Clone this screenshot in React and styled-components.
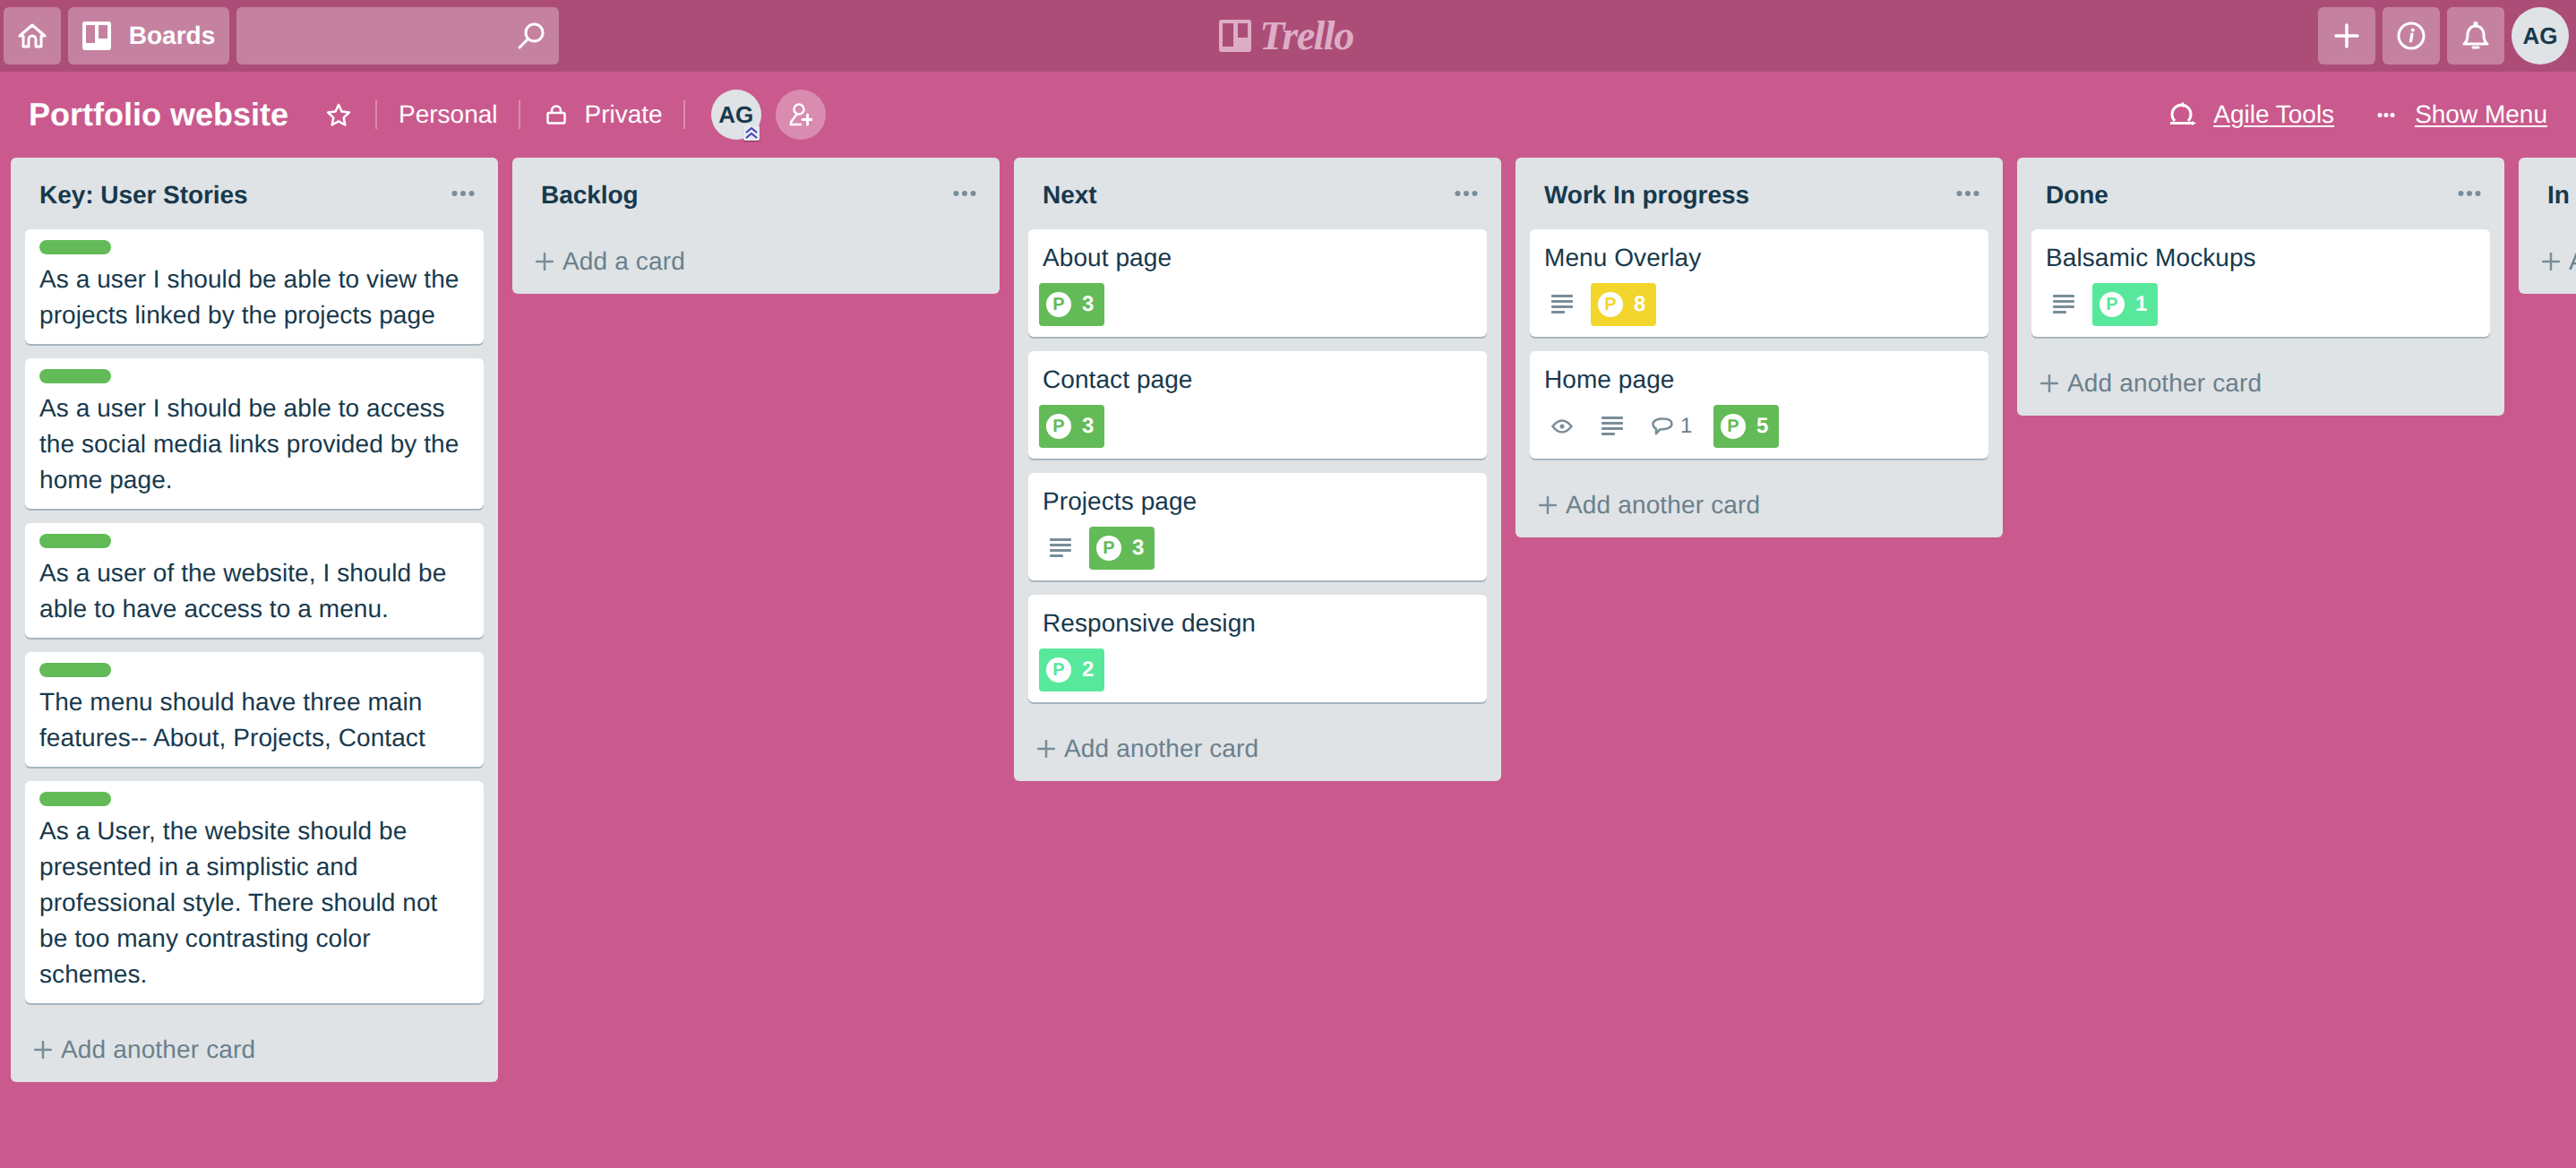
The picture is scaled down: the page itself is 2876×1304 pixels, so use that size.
import styled, { createGlobalStyle } from 'styled-components';

const textColor = '#17394D';
const mutedColor = '#6B808C';
const iconColor = '#798D99';
const green = '#63BB57';
const yellow = '#F2D62E';
const mint = '#58E89C';

const GlobalStyle = createGlobalStyle`
    html, body {
        margin: 0;
        padding: 0;
        height: 100%;
        overflow: hidden;
    }
    body {
        font-family: "Liberation Sans", Arial, sans-serif;
        background: #CA5A8E;
        text-rendering: geometricPrecision;
    }
`;

const Page = styled.div`
    width: 2876px;
    height: 1304px;
    display: flex;
    flex-direction: column;
    overflow: hidden;
    background: #CA5A8E;
`;

const TopBar = styled.header`
    display: grid;
    grid-template-columns: 1fr auto 1fr;
    align-items: center;
    height: 80px;
    padding: 0 8px 0 4px;
    background: #AC4D78;
`;

const BarGroup = styled.div`
    display: flex;
    align-items: center;
    gap: 8px;
    justify-content: ${props => props.$end ? 'flex-end' : 'flex-start'};
`;

const BarButton = styled.div`
    display: flex;
    align-items: center;
    justify-content: center;
    width: ${props => props.$width || 64}px;
    height: 64px;
    border-radius: 6px;
    background: rgba(255, 255, 255, 0.3);
    color: #fff;
`;

const BoardsText = styled.span`
    margin-left: 20px;
    font-size: 28px;
    font-weight: 700;
`;

const SearchBox = styled(BarButton)`
    justify-content: flex-end;
    padding-right: 16px;
    box-sizing: border-box;
`;

const Logo = styled.div`
    display: flex;
    align-items: center;
    gap: 9px;
    color: #DDADC6;
`;

const LogoWord = styled.span`
    font-family: "Liberation Serif", serif;
    font-style: italic;
    font-weight: 700;
    font-size: 46px;
    line-height: 60px;
    letter-spacing: -1.5px;
`;

const Avatar = styled.div`
    position: relative;
    display: flex;
    align-items: center;
    justify-content: center;
    width: ${props => props.$size}px;
    height: ${props => props.$size}px;
    border-radius: 50%;
    background: #DFE3E6;
    color: ${textColor};
    font-size: 26px;
    font-weight: 700;
`;

const AdminMark = styled.span`
    position: absolute;
    right: 2px;
    bottom: -1px;
    display: flex;
    width: 18px;
    height: 17px;
    border-radius: 2px;
    background: #E6E9EE;
    box-shadow: 0 1px 1px rgba(80, 20, 60, 0.6);
`;

const BoardBar = styled.div`
    display: flex;
    align-items: center;
    justify-content: space-between;
    height: 96px;
    padding: 0 32px;
    color: #fff;
`;

const BarSide = styled.div`
    display: flex;
    align-items: center;
`;

const BoardTitle = styled.h1`
    margin: 0 42px 0 0;
    font-size: 36px;
    font-weight: 700;
    line-height: 44px;
`;

const BarText = styled.span`
    font-size: 28px;
    line-height: 40px;
    margin-left: ${props => props.$gap || 0}px;
`;

const BarLink = styled(BarText)`
    text-decoration: underline;
    text-decoration-thickness: 2px;
    text-underline-offset: 3px;
`;

const BarDots = styled.span`
    display: flex;
    margin: 0 22px 0 48px;
`;

const Separator = styled.span`
    width: 2px;
    height: 32px;
    margin: 0 ${props => props.$after || 24}px 0 ${props => props.$before || 24}px;
    background: rgba(255, 255, 255, 0.3);
`;

const InviteButton = styled.div`
    display: flex;
    align-items: center;
    justify-content: center;
    width: 56px;
    height: 56px;
    margin-left: 16px;
    border-radius: 50%;
    background: rgba(255, 255, 255, 0.3);
`;

const Board = styled.main`
    display: flex;
    align-items: flex-start;
    gap: 16px;
    padding-left: 12px;
`;

const List = styled.section`
    flex: 0 0 544px;
    border-radius: 6px;
    background: #DFE3E6;
`;

const ListHeader = styled.div`
    display: flex;
    align-items: center;
    justify-content: space-between;
    height: 80px;
    padding: 0 26px 0 32px;
    box-sizing: border-box;
`;

const ListTitle = styled.h2`
    margin: 0;
    padding-top: 4px;
    color: ${textColor};
    font-size: 28px;
    font-weight: 700;
    letter-spacing: -0.05px;
    white-space: nowrap;
`;

const Cards = styled.div`
    display: flex;
    flex-direction: column;
    gap: 16px;
    padding: 0 16px 16px;
    &:empty {
        padding: 0;
    }
`;

const Card = styled.article`
    padding: 12px;
    border-radius: 6px;
    background: #fff;
    box-shadow: 0 2px 0 #A8B5BD;
    color: ${textColor};
    font-size: 28px;
    line-height: 40px;
    letter-spacing: 0.08px;
`;

const CardLabel = styled.div`
    width: 80px;
    height: 16px;
    margin: 0 0 8px 4px;
    border-radius: 8px;
    background: ${green};
`;

const CardText = styled.div`
    padding: 0 4px;
`;

const Badges = styled.div`
    display: flex;
    align-items: center;
    height: 48px;
    margin-top: 8px;
`;

const IconBadge = styled.span`
    display: flex;
    align-items: center;
    padding: 0 12px;
    margin-right: 8px;
    color: ${mutedColor};
    font-size: 24px;
`;

const CommentCount = styled.span`
    margin: 0 3px 0 8px;
    width: 14px;
`;

const PointsBadge = styled.span`
    display: flex;
    align-items: center;
    height: 48px;
    padding: 0 12px 0 8px;
    border-radius: 4px;
    background: ${props => props.$color};
    color: #fff;
    font-size: 24px;
    font-weight: 700;
`;

const PointsCircle = styled.span`
    display: flex;
    align-items: center;
    justify-content: center;
    width: 28px;
    height: 28px;
    margin-right: 12px;
    border-radius: 50%;
    background: #fff;
    color: ${props => props.$color};
    font-size: 20px;
`;

const AddCard = styled.div`
    display: flex;
    align-items: center;
    height: 72px;
    padding-left: 26px;
    color: ${mutedColor};
    font-size: 28px;
    letter-spacing: 0.15px;
    white-space: nowrap;
`;

const AddPlus = styled.svg`
    margin-right: 10px;
`;

const HomeIcon = () => (
    <svg width="32" height="28" viewBox="0 0 32 28" fill="none" stroke="#fff" strokeWidth="3" strokeLinejoin="round">
        <path d="M2 14 16 2l14 12h-4v12h-6v-8a4 4 0 0 0-8 0v8H6V14z" />
    </svg>
);

const BoardsIcon = () => (
    <svg width="32" height="32" viewBox="0 0 32 32">
        <path fill="#fff" fillRule="evenodd" d="M3 0h26a3 3 0 0 1 3 3v26a3 3 0 0 1-3 3H3a3 3 0 0 1-3-3V3a3 3 0 0 1 3-3zm1 4v20h10V4H4zm14 0v15h10V4H18z" />
    </svg>
);

const SearchIcon = () => (
    <svg width="30" height="30" viewBox="0 0 30 30" fill="none" stroke="#fff" strokeWidth="3" strokeLinecap="round">
        <circle cx="18.5" cy="11.5" r="9.5" />
        <path d="M11.5 18.500 2 28" />
    </svg>
);

const PlusIcon = () => (
    <svg width="28" height="28" viewBox="0 0 28 28" stroke="#fff" strokeWidth="3.500" strokeLinecap="round">
        <path d="M14 2v24M2 14h24" />
    </svg>
);

const InfoIcon = () => (
    <svg width="32" height="32" viewBox="0 0 32 32" fill="none">
        <circle cx="16" cy="16" r="14" stroke="#fff" strokeWidth="3" />
        <path d="M17 14l-1.500 8" stroke="#fff" strokeWidth="3.200" strokeLinecap="round" />
        <circle cx="17.800" cy="9.500" r="2" fill="#fff" />
    </svg>
);

const BellIcon = () => (
    <svg width="30" height="32" viewBox="0 0 30 32" fill="none" stroke="#fff" strokeWidth="3" strokeLinejoin="round">
        <path d="M2 25c3-2 4-5 4-10 0-6 4-10 9-10s9 4 9 10c0 5 1 8 4 10H2z" />
        <circle cx="15" cy="2.500" r="1" fill="#fff" />
        <path d="M12 29h6" strokeLinecap="round" />
    </svg>
);

const LogoMark = () => (
    <svg width="36" height="36" viewBox="0 0 36 36">
        <path fill="currentColor" fillRule="evenodd" d="M3 0h30a3 3 0 0 1 3 3v30a3 3 0 0 1-3 3H3a3 3 0 0 1-3-3V3a3 3 0 0 1 3-3zm1 4v26h12V4H4zm17 0v16h11V4H21z" />
    </svg>
);

const StarIcon = () => (
    <svg width="28" height="26" viewBox="0 0 28 26" fill="none" stroke="#fff" strokeWidth="2.500" strokeLinejoin="round">
        <path d="M14 2l3.500 7.600 8.300 1-6.100 5.700 1.600 8.200L14 20.400 6.700 24.500l1.600-8.200-6.100-5.700 8.300-1z" />
    </svg>
);

const LockIcon = () => (
    <svg width="22" height="22" viewBox="0 0 22 22" fill="none" stroke="#fff" strokeWidth="2.500">
        <rect x="1.500" y="9" width="19" height="11.500" rx="1.500" />
        <path d="M6 9V6.500a5 5 0 0 1 10 0V9" />
    </svg>
);

const InviteIcon = () => (
    <svg width="26" height="26" viewBox="0 0 26 26" fill="none" stroke="#fff" strokeWidth="2.500" strokeLinecap="round">
        <circle cx="11" cy="7" r="5.500" />
        <path d="M8.500 12.500 2 21.500v2.500h11" />
        <path d="M20.500 13v11M15 18.500h11" strokeWidth="3" />
    </svg>
);

const ChevronsIcon = () => (
    <svg width="18" height="17" viewBox="0 0 18 17" fill="none" stroke="#3A3FB5" strokeWidth="2">
        <path d="M3 8l6-5 6 5M3 14l6-5 6 5" />
    </svg>
);

const AgileIcon = () => (
    <svg width="30" height="28" viewBox="0 0 30 28" fill="none" stroke="#fff" strokeWidth="3">
        <path d="M5 21A10.500 10.500 0 1 1 20 21" />
        <path d="M0 23.500h25" />
        <path fill="#fff" stroke="none" d="M9 3l6-3v6zM24 21l5 2.500-5 2.500z" />
    </svg>
);

const DotsIcon = ({ fill, width = 26, r = 3 }) => (
    <svg width={width} height={r * 2} viewBox={`0 0 ${width} ${r * 2}`} fill={fill}>
        <circle cx={r + 0.5} cy={r} r={r} />
        <circle cx={width / 2} cy={r} r={r} />
        <circle cx={width - r - 0.5} cy={r} r={r} />
    </svg>
);

const DescIcon = () => (
    <svg width="24" height="22" viewBox="0 0 24 22" fill={iconColor}>
        <rect y="0" width="24" height="3" rx="1" />
        <rect y="6" width="24" height="3" rx="1" />
        <rect y="12" width="24" height="3" rx="1" />
        <rect y="18" width="15" height="3" rx="1" />
    </svg>
);

const EyeIcon = () => (
    <svg width="24" height="16" viewBox="0 0 24 16" fill="none" stroke={iconColor} strokeWidth="2.500">
        <path d="M1.500 8C5 3.500 8 1.500 12 1.500S19 3.500 22.500 8C19 12.500 16 14.500 12 14.500S5 12.500 1.500 8z" />
        <circle cx="12" cy="8" r="2.500" fill={iconColor} stroke="none" />
    </svg>
);

const CommentIcon = () => (
    <svg width="24" height="20" viewBox="0 0 24 20" fill="none" stroke={iconColor} strokeWidth="2.500" strokeLinejoin="round">
        <path d="M12.500 1.500c5.500 0 10 1.800 10 5.700s-5 6-10 6c-1.500 0-2.500 0-3.500.5l-4 4.500v-5.500C2.500 11.500 1.500 9.500 1.500 7.200c0-3.900 5.500-5.700 11-5.700z" />
    </svg>
);

const Plus = () => (
    <AddPlus width="20" height="20" viewBox="0 0 20 20" stroke={iconColor} strokeWidth="2.500" strokeLinecap="round">
        <path d="M10 1v18M1 10h18" />
    </AddPlus>
);

const Points = ({ color, value }) => (
    <PointsBadge $color={color}>
        <PointsCircle $color={color}>P</PointsCircle>
        {value}
    </PointsBadge>
);

const lists = [
    {
        title: 'Key: User Stories',
        add: 'Add another card',
        cards: [
            { label: true, text: 'As a user I should be able to view the projects linked by the projects page' },
            { label: true, text: 'As a user I should be able to access the social media links provided by the home page.' },
            { label: true, text: 'As a user of the website, I should be able to have access to a menu.' },
            { label: true, text: 'The menu should have three main features-- About, Projects, Contact' },
            { label: true, text: 'As a User, the website should be presented in a simplistic and professional style. There should not be too many contrasting color schemes.' },
        ],
    },
    { title: 'Backlog', add: 'Add a card', cards: [] },
    {
        title: 'Next',
        add: 'Add another card',
        cards: [
            { text: 'About page', color: green, points: 3 },
            { text: 'Contact page', color: green, points: 3 },
            { text: 'Projects page', desc: true, color: green, points: 3 },
            { text: 'Responsive design', color: mint, points: 2 },
        ],
    },
    {
        title: 'Work In progress',
        add: 'Add another card',
        cards: [
            { text: 'Menu Overlay', desc: true, color: yellow, points: 8 },
            { text: 'Home page', watch: true, desc: true, comments: 1, color: green, points: 5 },
        ],
    },
    {
        title: 'Done',
        add: 'Add another card',
        cards: [{ text: 'Balsamic Mockups', desc: true, color: mint, points: 1 }],
    },
    { title: 'In', add: 'Add a card', cards: [] },
];

const App = () => (
    <Page>
        <GlobalStyle />
        <TopBar>
            <BarGroup>
                <BarButton><HomeIcon /></BarButton>
                <BarButton $width={180}>
                    <BoardsIcon />
                    <BoardsText>Boards</BoardsText>
                </BarButton>
                <SearchBox $width={360}><SearchIcon /></SearchBox>
            </BarGroup>
            <Logo>
                <LogoMark />
                <LogoWord>Trello</LogoWord>
            </Logo>
            <BarGroup $end>
                <BarButton><PlusIcon /></BarButton>
                <BarButton><InfoIcon /></BarButton>
                <BarButton><BellIcon /></BarButton>
                <Avatar $size={64}>AG</Avatar>
            </BarGroup>
        </TopBar>
        <BoardBar>
            <BarSide>
                <BoardTitle>Portfolio website</BoardTitle>
                <StarIcon />
                <Separator $before={27} />
                <BarText>Personal</BarText>
                <Separator $before={23} $after={29} />
                <LockIcon />
                <BarText $gap={21}>Private</BarText>
                <Separator $before={23} $after={29} />
                <Avatar $size={56}>
                    AG
                    <AdminMark><ChevronsIcon /></AdminMark>
                </Avatar>
                <InviteButton><InviteIcon /></InviteButton>
            </BarSide>
            <BarSide>
                <AgileIcon />
                <BarLink $gap={18}>Agile Tools</BarLink>
                <BarDots><DotsIcon fill="#fff" width={20} r={2.5} /></BarDots>
                <BarLink>Show Menu</BarLink>
            </BarSide>
        </BoardBar>
        <Board>
            {lists.map(list => (
                <List key={list.title}>
                    <ListHeader>
                        <ListTitle>{list.title}</ListTitle>
                        <DotsIcon fill={iconColor} />
                    </ListHeader>
                    <Cards>
                        {list.cards.map(card => (
                            <Card key={card.text}>
                                {card.label && <CardLabel />}
                                <CardText>{card.text}</CardText>
                                {card.points && (
                                    <Badges>
                                        {card.watch && <IconBadge><EyeIcon /></IconBadge>}
                                        {card.desc && <IconBadge><DescIcon /></IconBadge>}
                                        {card.comments && (
                                            <IconBadge>
                                                <CommentIcon />
                                                <CommentCount>{card.comments}</CommentCount>
                                            </IconBadge>
                                        )}
                                        <Points color={card.color} value={card.points} />
                                    </Badges>
                                )}
                            </Card>
                        ))}
                    </Cards>
                    <AddCard><Plus />{list.add}</AddCard>
                </List>
            ))}
        </Board>
    </Page>
);

export default App;
